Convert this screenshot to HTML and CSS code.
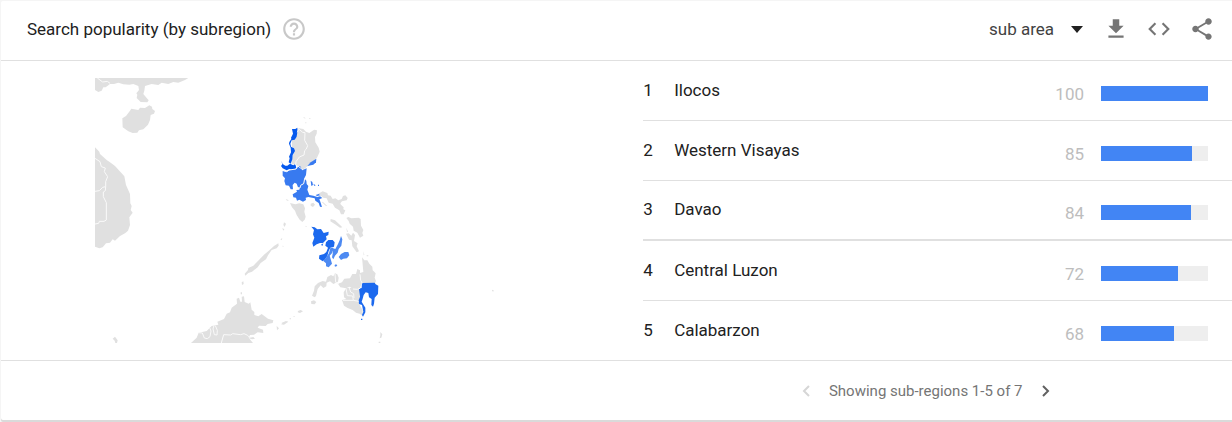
FILE: index.html
```html
<!DOCTYPE html>
<html lang="en">
<head>
  <meta charset="utf-8">
  <title>Search popularity</title>
  <link rel="stylesheet" href="styles.css">
</head>
<body>
  <section class="card">
    <header class="card-header">
      <h2>Search popularity (by subregion)</h2>
      <button type="button" class="icon-button help" aria-label="Help">
        <svg viewBox="0 0 24 24"><path d="M11 18h2v-2h-2v2zm1-16C6.480 2 2 6.480 2 12s4.480 10 10 10 10-4.480 10-10S17.520 2 12 2zm0 18c-4.410 0-8-3.590-8-8s3.590-8 8-8 8 3.590 8 8-3.590 8-8 8zm0-14c-2.210 0-4 1.790-4 4h2c0-1.100.9-2 2-2s2 .9 2 2c0 2-3 1.750-3 5h2c0-2.250 3-2.500 3-5 0-2.210-1.790-4-4-4z"/></svg>
      </button>
      <div class="actions">
        <div class="resolution">
          <select aria-label="Resolution">
            <option>sub area</option>
          </select>
          <svg class="arrow" viewBox="0 0 12 8"><path d="M0 1h12L6 8z"/></svg>
        </div>
        <button type="button" class="icon-button" aria-label="Download">
          <svg viewBox="0 0 24 24"><path d="M19 9h-4V3H9v6H5l7 7 7-7zM5 18v2h14v-2H5z"/></svg>
        </button>
        <button type="button" class="icon-button" aria-label="Embed">
          <svg viewBox="0 0 24 24"><path d="M9.400 16.600L4.800 12l4.600-4.600L8 6l-6 6 6 6 1.400-1.400zm5.200 0l4.600-4.600-4.600-4.600L16 6l6 6-6 6-1.400-1.400z"/></svg>
        </button>
        <button type="button" class="icon-button" aria-label="Share">
          <svg viewBox="0 0 24 24"><path d="M18 16.080c-.76 0-1.440.3-1.960.77L8.910 12.700c.05-.23.09-.46.09-.7s-.04-.47-.09-.7l7.050-4.110c.54.5 1.250.81 2.040.81 1.660 0 3-1.340 3-3s-1.340-3-3-3-3 1.340-3 3c0 .24.04.47.09.7L8.040 9.810C7.500 9.310 6.790 9 6 9c-1.660 0-3 1.340-3 3s1.340 3 3 3c.79 0 1.500-.31 2.040-.81l7.120 4.160c-.05.21-.08.43-.08.65 0 1.610 1.310 2.920 2.920 2.920s2.920-1.310 2.920-2.920-1.310-2.920-2.920-2.920z"/></svg>
        </button>
      </div>
    </header>

    <div class="card-body">
      <div class="map-panel">
        <svg class="map" viewBox="0 0 1200 795" role="img" aria-label="Map of the Philippines">
          <!-- China, Hainan, Vietnam -->
          <g transform="translate(-15 -24)">
            <path class="land" d="M15 24H295L285 30 265 38 250 36 235 42 215 38 205 45 185 42 165 48 163 62 160 72 170 84 176 91 172 97 152 96 140 84 142 74 139 70 147 60 145 48 130 42 118 44 100 43 85 38 72 42 60 42 47 52 40 52 35 62 25 66 15 60z"/>
            <path class="land" d="M97 145L108 138 120 122 124 116 145 120 150 113 165 114 178 106 186 110 187 117 195 123 192 131 182 135 180 150 174 164 160 178 147 181 142 188 128 189 115 184 98 172z"/>
            <path class="land" d="M15 232L28 245 30 252 50 270 60 277 75 288 88 302 103 319 108 345 120 372 121 400 125 408 122 420 128 428 118 442 120 465 114 482 105 490 90 498 75 512 68 508 60 518 48 520 38 532 28 535 15 530z"/>
            <path class="border" d="M22 24L38 36 52 34 60 40M15 265L30 275 34 290 46 294 43 305 53 320 47 335 47 350 38 352 28 362 15 364M47 350L46 362 40 366 40 380 49 398 49 450 42 454 28 454 26 460 15 462"/>
          </g>
          <!-- Luzon -->
          <g transform="translate(525 111)">
            <path class="land" d="M82 39L100 42 108 50 118 54 130 46 134 44 141 46 140 56 135 66 136 82 146 98 149 110 141 128 130 138 115 152 105 160 98 165 90 155 78 150 64 146 68 122 74 108 66 95 66 76 80 65z"/>
            <path class="ilocos" d="M66 42L76 42 82 38 82 52 80 65 74 74 65 76 61 86 63 95 72 100 75 108 68 120 67 133 62 146 56 142 59 130 57 125 63 112 62 98 57 86 58 81 64 72 63 68 69 56z"/>
            <path class="ilocos" d="M34 137L38 147 46 152 52 152 60 146 70 151 76 147 79 160 68 166 58 162 50 166 38 160 33 153 37 148z"/>
            <path class="luzon" d="M38 168L50 170 60 165 79 161 84 153 90 153 98 165 110 160 108 180 103 190 102 204 92 211 90 220 84 217 80 206 74 203 68 210 69 223 62 223 57 212 47 211 43 198 45 190 38 182z"/>
            <path class="luzon" d="M112 153L122 142 134 134 139 131 138 142 130 149z"/>
            <path class="luzon" d="M90 212L102 205 104 191 109 197 110 207 115 213 112 224 118 240 130 242 142 246 150 244 157 249 148 253 151 260 156 276 150 275 146 264 136 257 134 250 115 246 107 248 108 255 99 260 88 254 81 257 78 248 70 247 68 238 81 230 79 225 88 224z"/>
            <path class="luzon" d="M122 197L127 201 129 210 124 213zM130 206l7 5-4 2zM144 209h3v4h-3zM137 240l16-5 4 4-16 4z"/>
            <path class="land" d="M145 236L158 229 172 234 174 241 182 242 188 252 196 250 205 256 215 252 219 243 226 241 233 249 230 256 216 259 211 265 217 281 226 286 221 298 213 298 208 286 195 278 188 266 176 263 170 250 160 248z"/>
            <path class="land" d="M60 264L76 268 88 265 100 268 105 280 103 290 107 305 104 314 97 321 89 314 80 300 75 287 66 277zM122 266l8-3 5 6-6 7-7-4zM158 260l14 13-5-1-11-10zM182 312l13 4 12 11 10 10-7 1-15-10-14-9zM100 6l8 4-6 0zM47 252l10 4-6 1zM118 9h3v3h-3zM106 22h3v3h-3zM42 322l6 4-4 10-4-6zM36 340l7 2-2 5z"/>
            <path class="border" d="M82 52L86 43M83 39L98 52 105 53 104 76 113 92 109 102 104 107 102 120 88 126 78 140 77 150M40 167L50 170 58 165 78 162 84 153 99 165M80 218L90 219 92 211 101 206 104 190"/>
          </g>
          <!-- Visayas and Mindanao -->
          <g transform="translate(525 381)">
            <path class="land" d="M229 39L235 36 244 40 266 38 272 42 273 62 280 75 277 84 280 92 270 98 262 83 251 77 249 65 239 56 236 48zM228 86L236 85 244 92 249 83 255 90 252 108 263 115 260 124 267 139 260 142 247 124 245 106 237 104zM205 2l8 -3 8 8-2 10-8-2zM229 68l5 12-3 1zM280 138l3 12-2 1zM107 62l4 4h-4zM37 122l4 1-2 3zM290 151h5v3h-5z"/>
            <path class="visayas" d="M124 65L134 67 142 73 153 72 161 84 176 80 175 90 168 94 170 103 159 114 150 114 140 118 130 125 127 114 133 98 129 88 132 75zM153 119l7-4-3 8zM168 112L175 105 188 105 194 112 192 125 181 128 176 138 172 153 164 164 158 169 147 161 148 151 162 147 169 141 174 128 166 122z"/>
            <path class="cebu" d="M181 129L190 128 187 143 179 152 183 166 186 176 176 187 168 184 168 175 160 168 171 154 177 144zM213 93L217 103 214 122 206 132 203 143 195 152 190 163 186 157 189 141 187 129 196 132 204 117 209 106zM206 156L213 147 224 141 235 141 238 151 231 160 220 161 213 165zM194 180l4-2 4 3-4 4-4-1z"/>
            <path class="land" d="M276 157L283 166 292 166 298 176 307 185 308 196 317 205 314 218 318 228 315 234 276 235 269 223 270 204 280 201zM204 236L216 232 223 221 240 220 247 207 258 207 262 192 270 196 270 220 275 235 270 250 249 252 239 245 228 250 211 247zM216 285L229 282 222 277 221 262 229 249 270 248 268 298 278 316 278 333 269 326 258 323 248 315 233 309 222 302z"/>
            <path class="land" d="M134 277L126 272 132 257 134 244 144 234 158 228 168 230 172 216 183 210 190 214 195 205 202 208 206 218 204 230 190 237 180 229 170 233 169 244 160 249 152 241 143 252 138 273z"/>
            <path class="land" d="M123 289l9-3 7 5-5 7-10-1zM84 318l8-3 7 4-9 5-7-2zM68 335l7-2-2 3zM34 354l14-6 4 1-14 8z"/>
            <path class="davao" d="M276 234L314 233 317 238 325 242 324 267 314 278 312 296 309 305 304 300 305 282 297 277 295 264 287 262 281 270 278 281 275 290 279 297 286 308 286 322 279 335 276 330 280 320 276 300 267 297 266 286 270 275 267 251 275 249zM273 341h4v4h-4z"/>
            <path class="border" d="M195 206L197 232 206 236M270 208L272 226 277 235M219 286L250 286 266 289M228 250L232 272 248 273 250 286M237 247L242 261 251 266 252 279M249 252L262 253 270 250"/>
          </g>
          <!-- Palawan, Borneo and the Sulu islands -->
          <g transform="translate(-15 531)">
            <path class="land" d="M565 -35L566 -28 560 -20 545 -15 534 1 528 13 512 24 503 37 486 50 475 54 466 62 464 56 474 45 475 39 490 32 506 16 522 -1 538 -14 552 -27zM571 -47l6-4-2 7zM455 82l5-3 1 8-5 3zM452 112h4v6h-4z"/>
            <path class="land" d="M303 264L320 248 326 233 350 228 365 213 385 209 382 200 402 192 410 176 420 172 425 158 441 146 440 131 447 128 451 140 456 140 455 125 462 124 464 141 476 146 481 142 485 164 493 171 493 180 505 184 515 177 534 191 550 196 548 204 533 207 527 213 507 212 503 218 519 224 520 234 503 232 492 239 480 240 476 248 489 264z"/>
            <path class="border" d="M326 233L337 234 343 249 352 251 360 245 363 228 359 218M372 211L369 222 373 239 381 240 382 226 376 212M394 264L401 239 422 240 428 236 452 239 462 236 473 241 482 251"/>
            <path class="land" d="M68 251l7-6 8 11-2 8h-5l-2-7zM476 249l14-3 5 5-9 2zM560 213l7 7-6 6zM573 208l18-9 4 1-13 9zM599 190h4v3h-4zM871 231l6 7-3 10-5 2 2-9zM866 260h5v4h-5zM1207 104l4 2-1 4-4-2z"/>
          </g>
        </svg>
      </div>

      <table class="ranking">
        <tbody>
          <tr>
            <td class="rank">1</td>
            <th scope="row">Ilocos</th>
            <td class="value">100</td>
            <td class="meter"><div class="track"><div class="fill" style="width: 100%"></div></div></td>
          </tr>
          <tr>
            <td class="rank">2</td>
            <th scope="row">Western Visayas</th>
            <td class="value">85</td>
            <td class="meter"><div class="track"><div class="fill" style="width: 85%"></div></div></td>
          </tr>
          <tr>
            <td class="rank">3</td>
            <th scope="row">Davao</th>
            <td class="value">84</td>
            <td class="meter"><div class="track"><div class="fill" style="width: 84%"></div></div></td>
          </tr>
          <tr>
            <td class="rank">4</td>
            <th scope="row">Central Luzon</th>
            <td class="value">72</td>
            <td class="meter"><div class="track"><div class="fill" style="width: 72%"></div></div></td>
          </tr>
          <tr>
            <td class="rank">5</td>
            <th scope="row">Calabarzon</th>
            <td class="value">68</td>
            <td class="meter"><div class="track"><div class="fill" style="width: 68%"></div></div></td>
          </tr>
        </tbody>
      </table>
    </div>

    <footer class="card-footer">
      <nav class="pager">
        <button type="button" class="page-button" aria-label="Previous" disabled>
          <svg viewBox="0 0 8 12"><path d="M7 1L2 6l5 5"/></svg>
        </button>
        <span>Showing sub-regions 1-5 of 7</span>
        <button type="button" class="page-button" aria-label="Next">
          <svg viewBox="0 0 8 12"><path d="M1 1l5 5-5 5"/></svg>
        </button>
      </nav>
    </footer>
  </section>
</body>
</html>
```

FILE: styles.css
```css
* {
  box-sizing: border-box;
}

body {
  margin: 0;
  padding: 1px 0 2px 1px;
  background: #f5f5f5;
  color: #212121;
  font-family: Roboto, "Liberation Sans", sans-serif;
  font-size: 17px;
}

.card {
  background: #fff;
  border-radius: 2px 0 0 2px;
  box-shadow: 0 2px 0 #dadada;
}

.card-header {
  display: flex;
  align-items: center;
  height: 60px;
  padding: 0 17px 4px 26px;
  border-bottom: 1px solid #e0e0e0;
}

h2 {
  margin: 0;
  font-size: 17px;
  font-weight: 400;
}

button {
  padding: 0;
  border: 0;
  background: none;
}

.icon-button svg {
  display: block;
  width: 26px;
  height: 26px;
  fill: #757575;
}

.help {
  margin-left: 10px;
}

.help svg {
  fill: #c8c8c8;
}

.actions {
  display: flex;
  align-items: center;
  gap: 17px;
  margin-left: auto;
}

.resolution {
  display: flex;
  align-items: center;
  margin-right: 3px;
}

select {
  appearance: none;
  margin-right: -12px;
  padding: 0 28px 0 0;
  border: 0;
  background: none;
  color: #424242;
  font: inherit;
}

.arrow {
  width: 12px;
  height: 8px;
  fill: #212121;
  pointer-events: none;
}

.card-body {
  display: flex;
}

.map-panel {
  flex: 1;
  padding: 17px 0 0 94px;
}

.map {
  display: block;
  width: 100%;
  max-width: 400px;
}

.land {
  fill: #e0e0e0;
}

.ilocos {
  fill: #0559ee;
}

.visayas,
.davao {
  fill: #1c69ee;
}

.luzon {
  fill: #387af0;
}

.cebu {
  fill: #4d8af2;
}

.border {
  fill: none;
  stroke: #fafafa;
  stroke-width: 3;
}

.ranking {
  width: 48%;
  padding-left: 2px;
  border-spacing: 0;
}

.ranking td,
.ranking th {
  height: 60px;
  padding: 0 0 2px;
  border-bottom: 1px solid #e0e0e0;
  font-weight: 400;
  text-align: left;
}

.ranking tr:nth-child(3) td,
.ranking tr:nth-child(3) th {
  border-bottom-width: 2px;
}

.ranking tr:last-child td,
.ranking tr:last-child th {
  height: 59px;
  border-bottom: 0;
}

.ranking .rank {
  width: 31px;
}

.ranking .value {
  padding: 6px 17px 0 0;
  color: #bdbdbd;
  text-align: right;
}

.ranking .meter {
  width: 131px;
  padding: 5px 24px 0 0;
}

.track {
  height: 15px;
  background: #eee;
}

.fill {
  height: 100%;
  background: #4285f4;
}

.card-footer {
  display: flex;
  justify-content: flex-end;
  height: 60px;
  border-top: 1px solid #e0e0e0;
}

.pager {
  display: flex;
  align-items: center;
  justify-content: center;
  gap: 19px;
  width: 50%;
  padding-left: 3px;
  color: #757575;
  font-size: 15px;
}

.page-button svg {
  display: block;
  width: 8px;
  height: 12px;
  fill: none;
  stroke: #616161;
  stroke-width: 2;
}

.page-button:disabled svg {
  stroke: #d6d6d6;
}
```
